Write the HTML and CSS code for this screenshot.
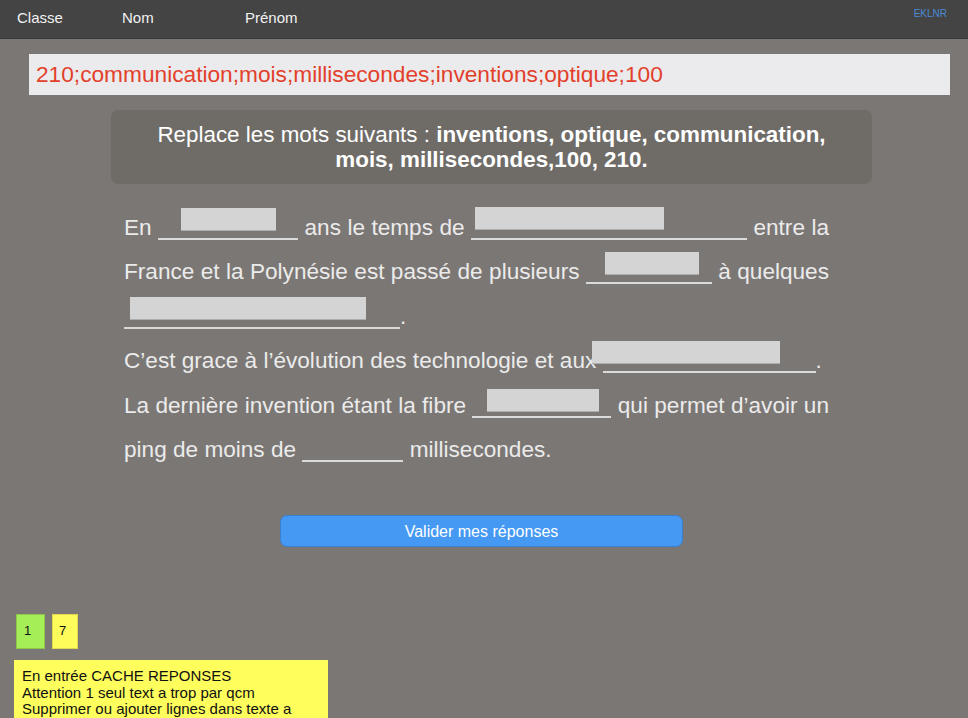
FILE: index.html
```html
<!DOCTYPE html>
<html lang="fr">
<head>
<meta charset="utf-8">
<title>Exercice</title>
<link rel="stylesheet" href="styles.css">
</head>
<body>
<header class="topbar">
  <span class="tb-item tb-classe">Classe</span>
  <span class="tb-item tb-nom">Nom</span>
  <span class="tb-item">Prénom</span>
  <span class="tb-code">EKLNR</span>
</header>

<div class="answers">210;communication;mois;millisecondes;inventions;optique;100</div>

<div class="consigne">Replace les mots suivants : <b>inventions, optique, communication,</b><br><b>mois, millisecondes,100, 210.</b></div>

<div class="texte">
  <div class="line just">En <span class="blank w140"><span class="box b1"></span></span> ans le temps de <span class="blank w276"><span class="box b2"></span></span> entre la</div>
  <div class="line just">France et la Polynésie est passé de plusieurs <span class="blank w126"><span class="box b3"></span></span> à quelques</div>
  <div class="line"><span class="blank w276"><span class="box b4"></span></span>.</div>
  <div class="line">C’est grace à l’évolution des technologie et aux <span class="blank w213"><span class="box b5"></span></span>.</div>
  <div class="line just">La dernière invention étant la fibre <span class="blank w139"><span class="box b6"></span></span> qui permet d’avoir un</div>
  <div class="line">ping de moins de <span class="blank w101"></span> millisecondes.</div>
</div>

<div class="btn">Valider mes réponses</div>

<div class="counters">
  <div class="count green">1</div>
  <div class="count yellow">7</div>
</div>

<div class="note">En entrée CACHE REPONSES<br>Attention 1 seul text a trop par qcm<br>Supprimer ou ajouter lignes dans texte a</div>
</body>
</html>
```

FILE: styles.css
```css
html, body {
  margin: 0;
  padding: 0;
  height: 718px;
  overflow: hidden;
}
body {
  background: #7b7774;
  font-family: "Liberation Sans", Arial, sans-serif;
}

.topbar {
  display: flex;
  align-items: flex-start;
  box-sizing: border-box;
  height: 39px;
  padding: 9px 21px 0 17px;
  background: #444444;
  border-bottom: 1px solid #393939;
  color: #f2f2f2;
  font-size: 15px;
  line-height: 18px;
}
.tb-classe { width: 105px; }
.tb-nom { width: 123px; }
.tb-code {
  margin-left: auto;
  margin-top: -1px;
  font-size: 10px;
  line-height: 12px;
  color: #4a8ad6;
}

.answers {
  margin: 15px 18px 0 29px;
  height: 41px;
  box-sizing: border-box;
  padding: 1px 7px 0;
  background: #ebebed;
  color: #e2402b;
  font-size: 22.7px;
  line-height: 39px;
  white-space: nowrap;
}

.consigne {
  margin: 15px 96px 0 111px;
  padding: 12px 10px;
  background: #6f6c68;
  border-radius: 7px;
  color: #ffffff;
  font-size: 22.4px;
  line-height: 25px;
  text-align: center;
}

.texte {
  margin-top: 22px;
  margin-left: 124px;
  width: 705px;
  color: #ebebeb;
  font-size: 22.6px;
  line-height: 44.4px;
}
.line { white-space: nowrap; }
.line.just {
  text-align: justify;
  text-align-last: justify;
  white-space: normal;
}

.blank {
  display: inline-block;
  position: relative;
  height: 0;
  border-bottom: 2px solid #dadada;
  vertical-align: -5px;
}
.w140 { width: 140px; }
.w276 { width: 276px; }
.w126 { width: 126px; }
.w213 { width: 213px; }
.w139 { width: 139px; }
.w101 { width: 101px; }

.box {
  position: absolute;
  top: -30px;
  height: 23px;
  box-sizing: border-box;
  background: #d4d4d4;
  border-bottom: 1px solid #adadad;
}
.b1 { left: 23px; width: 95px; }
.b2 { left: 4px; width: 189px; top: -31px; }
.b3 { left: 19px; width: 94px; }
.b4 { left: 6px; width: 236px; }
.b5 { left: -11px; width: 188px; }
.b6 { left: 15px; width: 112px; top: -27px; }

.btn {
  margin: 43px 0 0 280px;
  width: 403px;
  height: 32px;
  box-sizing: border-box;
  padding-top: 1px;
  background: #4599f3;
  border: 1px solid #3b7fcf;
  border-radius: 7px;
  color: #ffffff;
  font-size: 16px;
  line-height: 29px;
  text-align: center;
}

.counters {
  display: flex;
  gap: 7px;
  margin: 67px 0 0 16px;
}
.count {
  height: 35px;
  box-sizing: border-box;
  padding-top: 8px;
  font-size: 13px;
  line-height: 15px;
  color: #111111;
}
.green {
  width: 29px;
  padding-left: 7px;
  background: #a5ee57;
  border: 1px solid #8dc84a;
}
.yellow {
  width: 26px;
  padding-left: 6px;
  background: #fdfc5b;
  border: 1px solid #e0d84e;
}

.note {
  margin: 11px 0 0 14px;
  width: 314px;
  box-sizing: border-box;
  padding: 8px 8px;
  background: #fefe5d;
  color: #111111;
  font-size: 15px;
  line-height: 16.5px;
}
```
